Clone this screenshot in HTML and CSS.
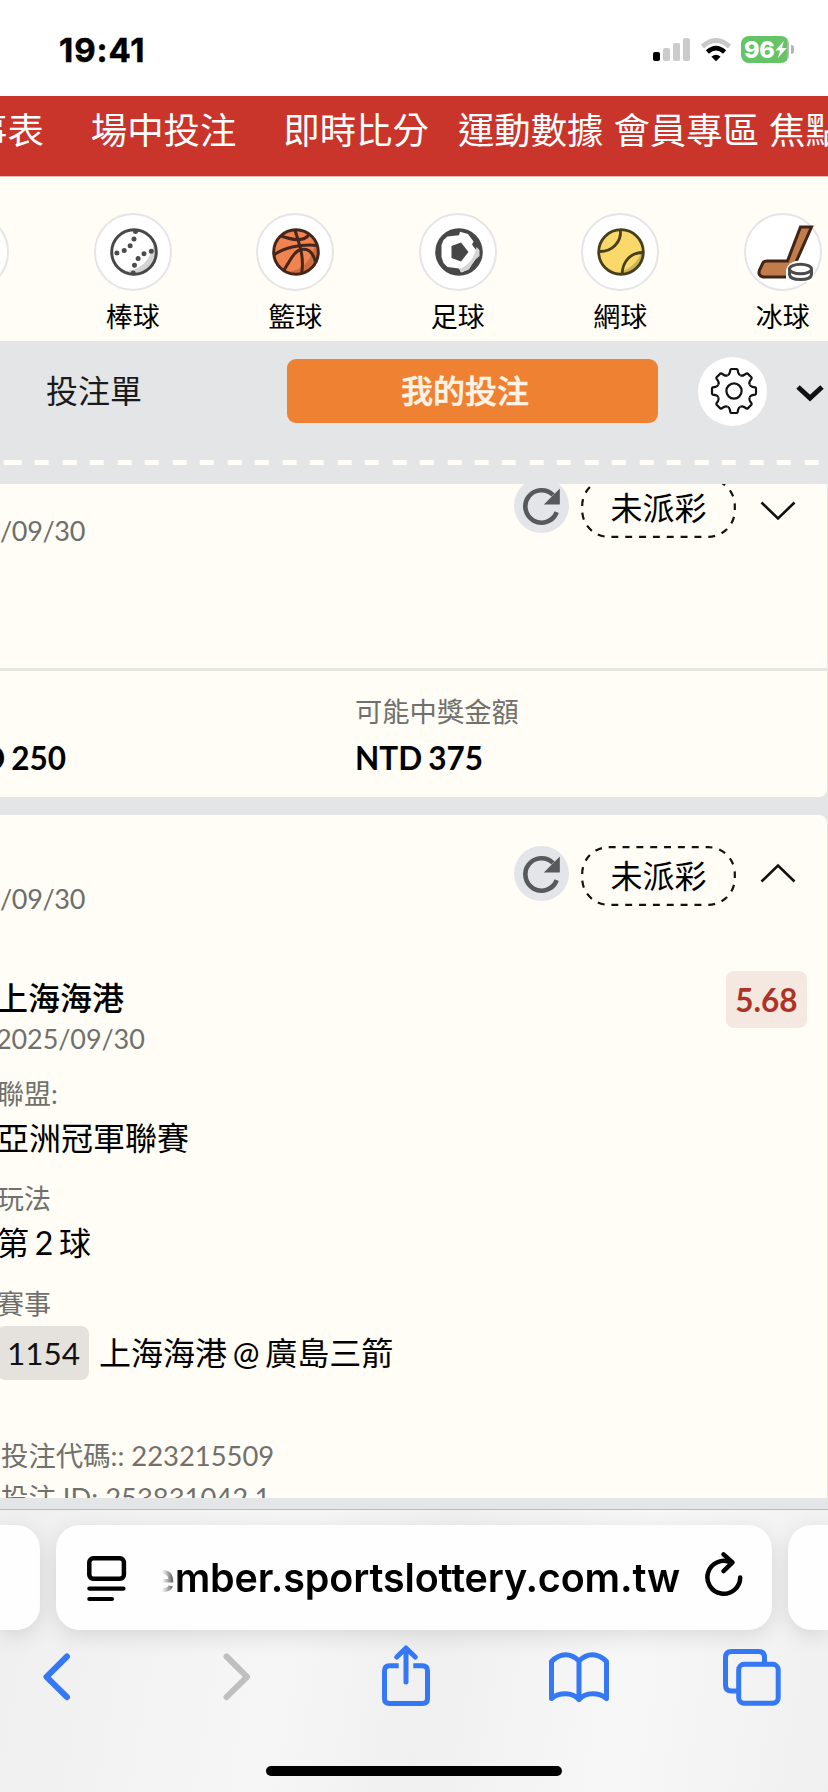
FILE: index.html
```html
<!DOCTYPE html>
<html lang="zh-Hant">
<head>
<meta charset="utf-8">
<title>我的投注</title>
<link rel="stylesheet" href="styles.css">
</head>
<body>
<svg class="defs" width="0" height="0">
  <defs>
    <path id="tooth" d="M-6.5-15.7C-5-16.2-4.5-17-4.2-18.4L-3.6-21.2Q-3.4-22-2.6-22H2.6Q3.4-22 3.6-21.2L4.2-18.4C4.5-17 5-16.2 6.500-15.7"/>
    <g id="reload-glyph">
      <path d="M42.700 34.100A16.200 16.200 0 1 1 39 17" fill="none" stroke="#58595b" stroke-width="4.600"/>
      <path d="M45.800 10.500V26.500H29.800z" fill="#58595b"/>
    </g>
    <rect id="dash-ring" x="1.200" y="1.200" width="152.600" height="57.600" rx="26.500" fill="none" stroke="#111" stroke-width="2.200" pathLength="378" stroke-dasharray="7 7"/>
  </defs>
</svg>
<div class="screen">
  <header class="status">
    <span class="clock">19:41</span>
    <div class="status-icons">
      <svg class="signal" width="37" height="24" viewBox="0 0 37 24">
        <rect x="0" y="14" width="7" height="9" rx="2"/>
        <g fill="#cbcbcb"><rect x="10" y="10" width="7" height="13" rx="2"/><rect x="20" y="5" width="7" height="18" rx="2"/><rect x="30" y="0" width="7" height="23" rx="2"/></g>
      </svg>
      <svg class="wifi" width="32" height="24" viewBox="0 0 32 24">
        <path d="M2.500 8.600Q16-3.600 29.500 8.600" fill="none" stroke="#c9c9c9" stroke-width="4.800"/>
        <path d="M7.400 14Q16 6.200 24.600 14" fill="none" stroke="#000" stroke-width="4.600"/>
        <path d="M11.400 18.800Q16 14.800 20.600 18.800L16 23.300z"/>
      </svg>
      <div class="battery">
        <span class="charge">96</span>
        <svg width="12" height="17" viewBox="0 0 12 17"><path d="M8.800 0L.4 9.500H5L3 17 11.700 7H7z" fill="#fff"/></svg>
      </div>
      <span class="battery-tip"></span>
    </div>
  </header>

  <nav class="nav">
    <a class="nav-first">事表</a><a class="nav-wide">場中投注</a><a class="nav-wide">即時比分</a><a class="nav-mid">運動數據</a><a>會員專區</a><a>焦點</a>
  </nav>

  <section class="sports">
    <div class="sport"><span class="disc"></span></div>
    <div class="sport"><span class="disc">
      <svg width="50" height="50" viewBox="0 0 50 50"><circle cx="25" cy="25" r="22.500" fill="#fff"/><path d="M45 17A22 22 0 0 1 13 44Q38 45 45 17" fill="#d3d3d3"/><g fill="none" stroke="#4c4c4c" stroke-width="5" stroke-linecap="round" stroke-dasharray="0 7.700"><path d="M26.500 4.500C26 16 18 26 4.500 26.200"/><path d="M24.200 46C24.500 34 32 24.300 46 24"/></g><circle cx="25" cy="25" r="22.300" fill="none" stroke="#484848" stroke-width="3"/></svg>
    </span><span class="sport-name">棒球</span></div>
    <div class="sport"><span class="disc">
      <svg width="50" height="50" viewBox="0 0 50 50"><circle cx="25" cy="25" r="23" fill="#f18350"/><path d="M45 14A23 23 0 0 1 13 44.500Q38 46 45 14" fill="#ca6d42"/><g fill="none" stroke="#44261a" stroke-width="3"><path d="M24 3C27 14 34 29 30.500 47"/><path d="M3 28C13 20 30 17 47 18.500"/><path d="M10 9C20 12.500 33 16 38.500 7"/><path d="M13 43C19 34 23 24 30 22.500S42 25 44.500 35"/></g><circle cx="25" cy="25" r="22.300" fill="none" stroke="#44261a" stroke-width="3"/></svg>
    </span><span class="sport-name">籃球</span></div>
    <div class="sport"><span class="disc">
      <svg width="50" height="50" viewBox="0 0 50 50"><circle cx="25" cy="25" r="23.800" fill="#484848"/><path d="M13.500 9.500L25 8.200 26 4.800 34 7 39.500 14.500 38 17.500 43 24.500 42.500 30 39.500 33.500 35 42 27.500 45.500 25 41.500 13.500 40 9.500 36 7.500 30V18L9.500 13z" fill="#fff"/><path d="M42.500 20L45.500 23V29L41.500 32.500 34.500 42.800 26.500 45 25.500 42Q39 37 42.500 20" fill="#d5d5d5"/><path d="M17.500 19L27 15.500 34.500 25 27 34.500 17.500 31z" fill="#454545"/></svg>
    </span><span class="sport-name">足球</span></div>
    <div class="sport"><span class="disc">
      <svg width="50" height="50" viewBox="0 0 50 50"><circle cx="25" cy="25" r="23" fill="#fad869"/><path d="M46 23A22 22 0 0 1 18 46Q40 43 46 23" fill="#ccb257"/><g fill="none" stroke="#473f1c" stroke-width="2.800"><path d="M24.500 3C25.500 15 16 25 3 24.500"/><path d="M26.200 47C26.500 33 36 25.500 47 25.500"/><circle cx="25" cy="25" r="22.300"/></g></svg>
    </span><span class="sport-name">網球</span></div>
    <div class="sport"><span class="disc">
      <svg class="hockey" width="58" height="58" viewBox="0 0 58 58"><path d="M44.500 3H55.500L38.500 41.500V53H7Q1.500 51.500 3.500 46L7 38.800Q8 37 11 37H31.500z" fill="#c27b4a" stroke="#412418" stroke-width="3"/><path d="M30 58V46Q32 37 44 36.500Q54 36.500 58 43V58z" fill="#fff"/><g fill="#fff" stroke="#4b4b4b" stroke-width="3"><path d="M33.500 45V50.500Q34 55.500 44.500 55.500T55.500 50.500V45"/><ellipse cx="44.500" cy="45" rx="11" ry="4.800"/></g></svg>
    </span><span class="sport-name">冰球</span></div>
  </section>

  <section class="tabs">
    <div class="tab-row">
      <span class="tab-slip">投注單</span>
      <button class="tab-mine">我的投注</button>
      <span class="gear">
        <svg width="50" height="50" viewBox="-25 -25 50 50" fill="none" stroke="#111" stroke-width="2.200"><circle r="7.600"/><use href="#tooth"/><use href="#tooth" transform="rotate(45)"/><use href="#tooth" transform="rotate(90)"/><use href="#tooth" transform="rotate(135)"/><use href="#tooth" transform="rotate(180)"/><use href="#tooth" transform="rotate(225)"/><use href="#tooth" transform="rotate(270)"/><use href="#tooth" transform="rotate(315)"/></svg>
      </span>
      <svg class="tab-arrow" width="28" height="18" viewBox="0 0 28 18"><path d="M2 3L14 14 26 3" fill="none" stroke="#111" stroke-width="5"/></svg>
    </div>
    <div class="perforation"></div>
  </section>

  <main class="list">
    <article class="card card-first">
      <div class="card-head">
        <span class="date">/09/30</span>
        <svg class="reload" width="55" height="55" viewBox="0 0 55 55"><circle cx="27.500" cy="27.500" r="27.500" fill="#e4e5e8"/><use href="#reload-glyph"/></svg>
        <span class="pill"><svg class="pill-ring" width="155" height="60"><use href="#dash-ring"/></svg>未派彩</span>
        <svg class="fold" width="36" height="20" viewBox="0 0 36 20"><path d="M1.500 1.500L18 17.500 34.500 1.500" fill="none" stroke="#111" stroke-width="2.600"/></svg>
      </div>
      <div class="amounts">
        <div class="stake"><span class="amount">NTD 250</span></div>
        <div class="payout"><span class="label">可能中獎金額</span><span class="amount">NTD 375</span></div>
      </div>
    </article>

    <article class="card card-open">
      <div class="card-head">
        <span class="date">/09/30</span>
        <svg class="reload" width="55" height="55" viewBox="0 0 55 55"><circle cx="27.500" cy="27.500" r="27.500" fill="#e4e5e8"/><use href="#reload-glyph"/></svg>
        <span class="pill"><svg class="pill-ring" width="155" height="60"><use href="#dash-ring"/></svg>未派彩</span>
        <svg class="fold fold-up" width="36" height="20" viewBox="0 0 36 20"><path d="M1.500 18.500L18 2.500 34.500 18.500" fill="none" stroke="#111" stroke-width="2.600"/></svg>
      </div>
      <div class="pick">
        <div class="pick-info"><strong class="team">上海海港</strong><span class="pick-date">2025/09/30</span></div>
        <span class="odds">5.68</span>
      </div>
      <dl class="details">
        <dt>聯盟:</dt><dd>亞洲冠軍聯賽</dd>
        <dt>玩法</dt><dd>第 2 球</dd>
        <dt>賽事</dt><dd class="match"><span class="code">1154</span><span>上海海港 @ 廣島三箭</span></dd>
      </dl>
      <div class="meta"><span>投注代碼:: 223215509</span><span>投注 ID: 253831042.1</span></div>
    </article>
  </main>

  <footer class="browser">
    <div class="address-row">
      <span class="tab-edge tab-left"></span>
      <div class="address">
        <svg class="page-icon" width="40" height="46" viewBox="0 0 40 46" fill="none" stroke="#000" stroke-linecap="round"><rect x="2.300" y="2.300" width="34.600" height="20.500" rx="4" stroke-width="4.500"/><path d="M2.300 32.600H36.500M2.300 43H25" stroke-width="4.200"/></svg>
        <span class="url">ember.sportslottery.com.tw</span>
        <svg class="reload-page" width="40" height="48" viewBox="0 0 40 48" fill="none" stroke="#000" stroke-width="4.500" stroke-linecap="round" stroke-linejoin="round"><path d="M35.200 27.500A16.400 16.400 0 1 1 26 12.600"/><path d="M18.500 4.300L27.500 12.400 18.500 21.200"/></svg>
      </div>
      <span class="tab-edge tab-right"></span>
    </div>
    <div class="toolbar">
      <svg class="back" width="28" height="48" viewBox="0 0 28 48"><path d="M24 3.500L3.500 23.800 24 44.200" fill="none" stroke="#3478f6" stroke-width="6" stroke-linecap="round" stroke-linejoin="round"/></svg>
      <svg class="forward" width="28" height="48" viewBox="0 0 28 48"><path d="M3.500 3.500L24 23.800 3.500 44.200" fill="none" stroke="#bfbfbf" stroke-width="6" stroke-linecap="round" stroke-linejoin="round"/></svg>
      <svg class="share" width="48" height="62" viewBox="0 0 48 62" fill="none" stroke="#3478f6" stroke-width="5"><path d="M16.700 20.700H7.500Q2.500 20.700 2.500 25.700V53.500Q2.500 58.500 7.500 58.500H40.500Q45.500 58.500 45.500 53.500V25.700Q45.500 20.700 40.500 20.700H31.300"/><path d="M24 37V3.500M14.800 12L24 3 33.200 12" stroke-linecap="round" stroke-linejoin="round"/></svg>
      <svg class="book" width="60" height="52" viewBox="0 0 60 52" fill="none" stroke="#3478f6" stroke-width="5" stroke-linejoin="round"><path d="M30 9Q24 2.700 16.500 2.700T2.500 9.500V46.500Q8 41.700 16.500 41.700T30 47.500Q35 41.700 43.500 41.700T57.500 46.500V9.500Q51 2.700 43.500 2.700T30 9zV47"/></svg>
      <svg class="windows" width="58" height="58" viewBox="0 0 58 58" fill="none" stroke="#3478f6" stroke-width="5"><path d="M14 42H8.500Q2.500 42 2.500 36V8.500Q2.500 2.500 8.500 2.500H35.500Q41.500 2.500 41.500 8.500V14"/><rect x="15.700" y="15.300" width="39.500" height="39" rx="5.500"/></svg>
    </div>
    <div class="home-bar"></div>
  </footer>
</div>
</body>
</html>
```
FILE: styles.css
```css
* { box-sizing: border-box; }
body { margin: 0; background: #fff; }
.defs { position: absolute; }
svg { display: block; flex: none; }
.screen {
  width: 828px; height: 1792px; overflow: hidden;
  display: flex; flex-direction: column;
  font-family: Lato, "Noto Sans CJK TC", sans-serif; color: #000;
  background: #e4e5e7; white-space: nowrap;
}

/* status bar */
.status { height: 96px; flex: none; background: #fff; display: flex; justify-content: space-between; padding: 0 34px 0 59px; }
.clock { font: 700 33px/100px Inter, sans-serif; letter-spacing: .9px; -webkit-text-stroke: .5px #000; }
.status-icons { display: flex; align-items: center; height: 99px; }
.wifi { margin-left: 10px; }
.battery {
  margin-left: 9px; width: 48px; height: 27px; border-radius: 8px;
  background: linear-gradient(90deg, #65c466 46px, #b4b4b4 46px);
  display: flex; align-items: center; padding-left: 3px;
}
.charge { color: #fff; font: 800 23.500px/28px Inter, sans-serif; letter-spacing: -.3px; width: 31px; }
.battery-tip { width: 3px; height: 9px; margin-left: 2px; background: #b4b4b4; border-radius: 0 3px 3px 0; }

/* top navigation */
.nav {
  height: 81px; flex: none; display: flex; overflow: hidden;
  background: #c9342b; border-bottom: 1px solid #f0bdb4;
  color: #fff; font-size: 36.400px; line-height: 69px; font-weight: 400;
}
.nav a { flex: none; margin-left: 10px; }
.nav .nav-first { margin-left: -29px; }
.nav .nav-wide { margin-left: 47px; }
.nav .nav-mid { margin-left: 29px; }

/* sports */
.sports { height: 164px; flex: none; background: #fffdf5; display: flex; padding-top: 36px; margin-left: -111px; }
.sport { width: 162.500px; flex: none; display: flex; flex-direction: column; align-items: center; }
.disc {
  width: 78px; height: 78px; flex: none; border: 2px solid #e5e5e7; border-radius: 50%; background: #fff;
  display: flex; align-items: center; justify-content: center; padding-left: 2px;
}
.hockey { margin: 0 0 -1px 2px; }
.sport-name { font-size: 27px; line-height: 50px; margin-top: 1px; }

/* tabs */
.tabs { height: 143px; flex: none; }
.tab-row { display: flex; align-items: center; height: 100px; padding-left: 46px; }
.tab-slip { width: 241px; font-size: 32px; line-height: 64px; color: #1a1a1a; }
.tab-mine {
  width: 371px; height: 64px; border: 0; border-radius: 9px; padding: 0 15px 0 0;
  background: #ef8132; color: #fff3e6; -webkit-text-stroke: .5px #fff3e6;
  font: 500 32px/64px Lato, "Noto Sans CJK TC", sans-serif;
}
.gear { width: 69px; height: 69px; margin-left: 40px; border-radius: 50%; background: #fff; display: flex; align-items: center; justify-content: center; padding-left: 2px; }
.tab-arrow { margin: 4px 0 0 29px; }
.perforation { height: 5px; margin-top: 19px; background: repeating-linear-gradient(90deg, #fffdf5 0 14px, transparent 14px 27.470px) 7.700px 0; }

/* bet cards */
.list { height: 1014px; flex: none; overflow: hidden; display: flex; flex-direction: column; gap: 18px; }
.card { background: #fffdf5; width: 827px; flex: none; }
.card-first { display: flow-root; height: 313px; border-radius: 0 0 8px 0; overflow: hidden; }
.card-open { height: 720px; border-radius: 0 8px 0 0; }
.card-head { display: flex; height: 125px; padding-top: 31px; }
.card-first .card-head { margin-top: -37px; }
.date { width: 514px; padding-top: 34px; font-size: 27px; line-height: 38px; letter-spacing: -.35px; color: #6d6d6b; }
.pill { position: relative; width: 155px; height: 60px; margin-left: 12px; text-align: center; font-size: 32px; line-height: 60px; }
.pill-ring { position: absolute; inset: 0; }
.fold { margin: 23px 0 0 24px; }
.fold-up { margin-top: 17px; }
.amounts { display: flex; margin-top: 96px; height: 129px; border-top: 3px solid #e7e7e2; line-height: 46px; }
.stake { width: 355px; display: flex; align-items: flex-start; padding-top: 64px; }
.stake .amount { margin-left: -62px; }
.payout { display: flex; flex-direction: column; padding-top: 18px; }
.label { font-size: 27.300px; color: #70706d; }
.amount { font-size: 31.500px; font-weight: 700; word-spacing: -1.500px; }

.pick { display: flex; justify-content: space-between; padding: 31px 20px 0 0; margin-left: -4px; height: 118px; }
.pick-info { display: flex; flex-direction: column; margin-top: 5px; }
.team { font-size: 32px; line-height: 44px; font-weight: 500; }
.pick-date { font-size: 27px; line-height: 38px; letter-spacing: -.1px; color: #70706d; }
.odds { width: 81px; height: 57px; border-radius: 8px; background: #f5e8e0; color: #ad3326; font-size: 31.500px; font-weight: 700; line-height: 58px; text-align: center; }
.details { margin: 0 0 0 -3px; }
.details dt { font-size: 27px; line-height: 40px; color: #70706d; margin-top: 17px; }
.details dt:first-child { margin-top: 16px; }
.details dd { margin: 0; font-size: 32px; line-height: 48px; word-spacing: -2.500px; }
.details .match { display: flex; align-items: center; gap: 10px; padding-top: 2px; line-height: 54px; }
.code { width: 92px; height: 54px; border-radius: 8px; background: #e5e2dd; text-align: center; font-size: 31.500px; line-height: 55px; padding-left: 1px; color: #111; }
.meta { display: flex; flex-direction: column; margin: 55px 0 0 1px; font-size: 27.400px; line-height: 41.500px; color: #70706d; }

/* browser chrome */
.browser {
  height: 283px; flex: none; margin-top: 11px; border-top: 1px solid #b9babf;
  background: linear-gradient(100deg, #efefef, #f6f6f6 35%, #f0f0f0 52%, #f7f7f7 75%, #f0f0f0);
}
.address-row { display: flex; gap: 16px; padding-top: 15px; height: 121px; }
.tab-edge, .address { background: #fefefe; height: 105px; box-shadow: 0 6px 22px rgba(0, 0, 0, .11); }
.tab-edge { width: 40px; }
.tab-left { border-radius: 0 24px 24px 0; }
.tab-right { border-radius: 24px 0 0 24px; }
.address { width: 716px; border-radius: 24px; display: flex; align-items: center; padding-left: 31px; }
.page-icon { margin-top: 3px; }
.url {
  width: 522px; margin-left: 31px; overflow: hidden; display: flex; justify-content: flex-end;
  font: 600 39.500px/60px Inter, sans-serif; letter-spacing: -.15px;
  -webkit-mask-image: linear-gradient(90deg, transparent 4px, #000 22px);
  mask-image: linear-gradient(90deg, transparent 4px, #000 22px);
}
.reload-page { margin-left: 25px; margin-top: -8px; }
.toolbar { display: flex; align-items: flex-start; height: 110px; padding: 14px 0 0 43px; }
.back, .forward { margin-top: 8px; }
.forward { margin-left: 152px; }
.share { margin-left: 131px; }
.book { margin: 7px 0 0 119px; }
.windows { margin: 4px 0 0 114px; }
.home-bar { width: 296px; height: 10px; margin: 25px auto 0; border-radius: 5px; background: #000; }
```
